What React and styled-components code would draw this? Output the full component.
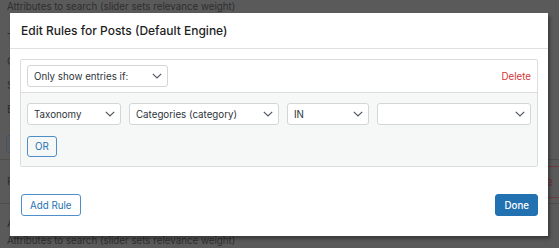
import React from 'react'
import styled, { createGlobalStyle } from 'styled-components'

const GlobalStyle = createGlobalStyle`
  html, body {
    margin: 0;
    padding: 0;
    overflow: hidden;
  }

  body {
    font-family: Inter, "Noto Sans", "Liberation Sans", sans-serif;
    -webkit-font-smoothing: antialiased;
  }
`

const Chevron = () => (
  <svg width="10" height="6" viewBox="0 0 10 6" fill="none">
    <path d="M0.8 0.8L5 5l4.2-4.2" stroke="#50575e" strokeWidth="1.2" />
  </svg>
)

const Select = ({ label, width }) => (
  <SelectBox $width={width}>
    <span>{label}</span>
    <Chevron />
  </SelectBox>
)

const App = () => (
  <>
    <GlobalStyle />
    <Page>
      <PageText>Attributes to search (slider sets relevance weight)</PageText>
      <List>
        <PageItem>Title</PageItem>
        <PageItem>Content</PageItem>
        <PageItem>Slug</PageItem>
        <PageItem>Excerpt</PageItem>
      </List>
      <GhostButton />
      <Section>
        <PageItem>Filters</PageItem>
        <DangerGhost>Delete</DangerGhost>
      </Section>
      <LastRow>
        <PageItem>Attributes</PageItem>
      </LastRow>
      <PageText>Attributes to search (slider sets relevance weight)</PageText>

      <Modal>
        <Header>
          <Title>Edit Rules for Posts (Default Engine)</Title>
        </Header>
        <Body>
          <RuleGroup>
            <GroupTop>
              <Select label="Only show entries if:" width={141} />
              <DeleteLink>Delete</DeleteLink>
            </GroupTop>
            <GroupBody>
              <Conditions>
                <Select label="Taxonomy" width={94} />
                <Select label="Categories (category)" width={150} />
                <Select label="IN" width={82} />
                <Select label="" />
              </Conditions>
              <div>
                <Button $small>OR</Button>
              </div>
            </GroupBody>
          </RuleGroup>
        </Body>
        <Footer>
          <Button>Add Rule</Button>
          <Button $primary>Done</Button>
        </Footer>
      </Modal>
    </Page>
  </>
)

const Page = styled.div`
  position: relative;
  width: 559px;
  height: 248px;
  background: #5a5a5a;
  color: #2e2e2e;
  font-size: 9.75px;
  overflow: hidden;
  display: flex;
  flex-direction: column;
`

const PageText = styled.div`
  flex-shrink: 0;
  padding: 0 7px;
  height: 14px;
  line-height: 14px;
  white-space: nowrap;
`

const List = styled.div`
  display: flex;
  flex-direction: column;
  padding-top: 16px;
  gap: 9px;
`

const PageItem = styled.div`
  padding: 0 7px;
  height: 15px;
  line-height: 15px;
  font-size: 11px;
`

const GhostButton = styled.div`
  flex-shrink: 0;
  margin: 18px 0 0 6px;
  width: 40px;
  height: 16px;
  border: 1px solid #3a5570;
  border-radius: 3px;
`

const Section = styled.div`
  flex-shrink: 0;
  margin-top: 6px;
  height: 43px;
  border-top: 1px solid #4d4d4d;
  border-bottom: 1px solid #4d4d4d;
  display: flex;
  align-items: center;
  justify-content: space-between;
`

const DangerGhost = styled.div`
  margin-right: -20px;
  height: 30px;
  padding: 0 26px 0 12px;
  line-height: 30px;
  border-top: 1px solid #6e3b3b;
  border-bottom: 1px solid #6e3b3b;
  color: #6b3030;
  font-size: 11px;
`

const LastRow = styled.div`
  flex-shrink: 0;
  height: 30px;
  display: flex;
  align-items: flex-end;
  padding-bottom: 3px;
  box-sizing: border-box;
`

const Modal = styled.div`
  position: absolute;
  left: 10px;
  top: 13px;
  width: 538px;
  height: 223px;
  background: #fff;
  box-shadow: 2px 3px 3px rgba(0, 0, 0, 0.35);
  display: flex;
  flex-direction: column;
  color: #1e1e1e;
`

const Header = styled.div`
  height: 35px;
  border-bottom: 1px solid #e0e0e0;
  display: flex;
  align-items: center;
  padding: 0 11px;
`

const Title = styled.h1`
  margin: 0;
  font-size: 12px;
  font-weight: 500;
`

const Body = styled.div`
  padding: 10px 10px 0;
`

const RuleGroup = styled.div`
  border: 1px solid #dcdcde;
  border-radius: 2px;
`

const GroupTop = styled.div`
  height: 32px;
  padding: 0 6px;
  display: flex;
  align-items: center;
  justify-content: space-between;
  border-bottom: 1px solid #dcdcde;
`

const DeleteLink = styled.span`
  color: #d63638;
  font-size: 9.75px;
`

const GroupBody = styled.div`
  background: #f6f7f7;
  padding: 10px 6px 9px;
  display: flex;
  flex-direction: column;
  gap: 11px;
`

const Conditions = styled.div`
  display: flex;
  gap: 8px;
`

const SelectBox = styled.div`
  box-sizing: border-box;
  height: 22px;
  ${({ $width }) => ($width ? `width: ${$width}px;` : 'flex: 1;')}
  flex-shrink: 0;
  padding: 0 5px 0 6px;
  display: flex;
  align-items: center;
  justify-content: space-between;
  background: #fff;
  border: 1px solid #d4d5d8;
  border-radius: 3px;
  color: #2c3338;
  font-size: 9.75px;
  white-space: nowrap;
`

const Footer = styled.div`
  margin-top: auto;
  padding: 0 10px 20px 11px;
  display: flex;
  justify-content: space-between;
`

const Button = styled.button`
  box-sizing: border-box;
  height: ${({ $small }) => ($small ? '21px' : '22px')};
  padding: 0 ${({ $small }) => ($small ? '7px' : '8px')};
  border: 1px solid ${({ $primary }) => ($primary ? '#2271b1' : '#4f8fc9')};
  border-radius: 3px;
  background: ${({ $primary, $small }) => ($primary ? '#2271b1' : $small ? '#f6f7f7' : '#fff')};
  color: ${({ $primary }) => ($primary ? '#fff' : '#2271b1')};
  font-family: inherit;
  font-size: 9.75px;
  font-weight: ${({ $primary }) => ($primary ? 500 : 400)};
  cursor: pointer;
`

export default App
